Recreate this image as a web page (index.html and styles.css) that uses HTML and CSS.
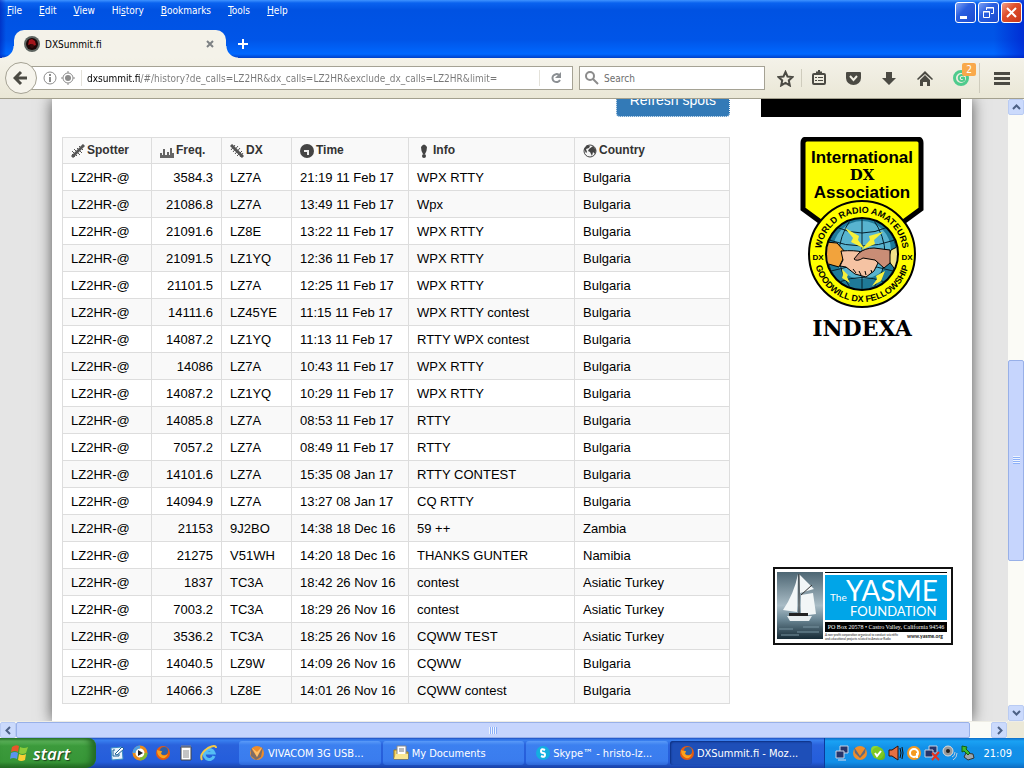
FILE: index.html
```html
<!DOCTYPE html>
<html lang="en">

<head>
    <meta charset="UTF-8">
    <meta name="viewport" content="width=device-width, initial-scale=1.0">
    <title>DXSummit.fi</title>
    <link rel="stylesheet" href="styles.css">
</head>

<body>
    <!-- window title, menu and tabs -->
    <header class="titlebar">
        <div class="menu-row">
            <nav class="menu">
                <button><u>F</u>ile</button>
                <button><u>E</u>dit</button>
                <button><u>V</u>iew</button>
                <button>Hi<u>s</u>tory</button>
                <button><u>B</u>ookmarks</button>
                <button><u>T</u>ools</button>
                <button><u>H</u>elp</button>
            </nav>
            <div class="window-buttons">
                <button class="win-btn" aria-label="Minimize"><svg width="19" height="19" viewBox="0 0 19 19"><path d="M4 13h7v3H4z" fill="#fff"/></svg></button>
                <button class="win-btn" aria-label="Restore"><svg width="19" height="19" viewBox="0 0 19 19" fill="none" stroke="#fff"><path d="M7.5 7V4.5h7v6H12M7 5h8"/><path d="M4.5 8.5h6v6h-6zM4 9h7"/></svg></button>
                <button class="win-btn close" aria-label="Close"><svg width="19" height="19" viewBox="0 0 19 19"><path d="M5 5l9 9M14 5l-9 9" stroke="#fff" stroke-width="2"/></svg></button>
            </div>
        </div>
        <div class="tabs">
            <div class="tab">
                <svg width="16" height="16" viewBox="0 0 16 16"><circle cx="8" cy="8" r="8" fill="#5d6460"/><circle cx="8" cy="8" r="6" fill="#1c0606"/><path d="M5 4l3-1 3 2 1 4-3 1-2-2-3 1z" fill="#a3161b"/><circle cx="8" cy="10" r="2" fill="#3c0c0c"/></svg>
                <span>DXSummit.fi</span>
                <button class="tab-close" aria-label="Close tab"><svg width="8" height="8" viewBox="0 0 8 8"><path d="M1 1l6 6M7 1L1 7" stroke="#7d8184" stroke-width="2"/></svg></button>
            </div>
            <button class="new-tab" aria-label="New tab"><svg width="12" height="12" viewBox="0 0 12 12"><path d="M6 1v10M1 6h10" stroke="#fff" stroke-width="2"/></svg></button>
        </div>
    </header>

    <div class="navbar">
        <button class="back" aria-label="Back"><svg width="16" height="16" viewBox="0 0 16 16" fill="none" stroke="#4b4a43" stroke-width="3"><path d="M8 2L2 8l6 6M2 8h12"/></svg></button>
        <div class="urlbar">
            <svg width="14" height="14" viewBox="0 0 14 14"><circle cx="7" cy="7" r="6" fill="none" stroke="#8b8b8b"/><path d="M6 3h2v2H6zM6 6h2v5H6z" fill="#8b8b8b"/></svg>
            <svg width="14" height="14" viewBox="0 0 14 14"><circle cx="7" cy="7" r="5" fill="none" stroke="#8b8b8b"/><circle cx="7" cy="7" r="3" fill="#8b8b8b"/><path d="M7 0v2M7 12v2M0 7h2M12 7h2" stroke="#8b8b8b"/></svg>
            <input class="url" type="text" aria-label="Address" value="dxsummit.fi/#/history?de_calls=LZ2HR&amp;dx_calls=LZ2HR&amp;exclude_dx_calls=LZ2HR&amp;limit=">
            <button class="reload" aria-label="Reload"><svg width="12" height="12" viewBox="0 0 12 12"><path d="M9 3a4 4 0 1 0 1 5" fill="none" stroke="#8b8f93" stroke-width="2"/><path d="M11 0v6H5z" fill="#8b8f93"/></svg></button>
        </div>
        <div class="search">
            <svg width="14" height="14" viewBox="0 0 14 14" fill="none" stroke="#8b8b8b" stroke-width="2"><circle cx="5" cy="5" r="4"/><path d="M8 8l5 5"/></svg>
            <input type="text" placeholder="Search" aria-label="Search">
        </div>
        <div class="tools">
            <button aria-label="Bookmark this page"><svg width="17" height="17" viewBox="0 0 17 17"><path d="M8.5 2l2 4.5 5 .5-3.7 3.4 1 5-4.3-2.6-4.3 2.6 1-5L1.5 7l5-.5z" fill="none" stroke="#4b4a43" stroke-width="2"/></svg></button>
            <button class="divided" aria-label="Show bookmarks"><svg width="14" height="16" viewBox="0 0 14 16" fill="none" stroke="#4b4a43"><rect x="1" y="4" width="12" height="10" rx="1" stroke-width="2"/><path d="M3 7.5h2M6 7.5h5M3 10.5h2M6 10.5h5"/><path d="M4 2.5h6M6 1h2" stroke-width="2"/></svg></button>
            <button aria-label="Pocket"><svg width="17" height="15" viewBox="0 0 17 15"><path d="M2 1h13q1 0 1 1v5a7.5 7 0 0 1-15 0V2q0-1 1-1z" fill="#4b4a43"/><path d="M5 5l3.5 4L12 5" fill="none" stroke="#f1efe3" stroke-width="2"/></svg></button>
            <button aria-label="Downloads"><svg width="14" height="15" viewBox="0 0 14 15"><path d="M4 1h6v6h4l-7 7-7-7h4z" fill="#4b4a43"/></svg></button>
            <button aria-label="Home"><svg width="16" height="15" viewBox="0 0 16 15"><path d="M8 0l8 8-1 1-7-6-7 6-1-1z" fill="#4b4a43"/><path d="M8 4l5 5v6h-3v-4H6v4H3V9z" fill="#4b4a43"/></svg></button>
            <button class="grammar" aria-label="Grammar check"><svg width="17" height="17" viewBox="0 0 17 17" fill="none" stroke="#4fcb8d"><circle cx="8" cy="8" r="6.5" stroke-width="3"/><path d="M11 6a3 3 0 1 0 0 4V8H8" stroke-width="2"/></svg><span class="badge">2</span></button>
            <button class="divided hamburger" aria-label="Open menu"><svg width="16" height="13" viewBox="0 0 16 13"><path d="M0 1.5h16M0 6.5h16M0 11.5h16" stroke="#4b4a43" stroke-width="3"/></svg></button>
        </div>
    </div>

    <div class="viewport">
        <div class="desk">
            <main class="sheet">
                <section class="spots">
                    <div class="clip right"><button class="btn-refresh">Refresh spots</button></div>
                    <table>
                        <colgroup>
                            <col class="c-spotter"><col class="c-freq"><col class="c-dx"><col class="c-time"><col class="c-info"><col>
                        </colgroup>
                        <thead>
                            <tr>
                                <th><svg width="14" height="14" viewBox="0 0 14 14" stroke="#555" fill="none"><path d="M1 13L13 1" stroke-width="3"/><path d="M1 7l5 5M3 5l6 6M6 4l5 5M8 2l4 4M1 10l3 3"/></svg>Spotter</th>
                                <th><svg width="14" height="14" viewBox="0 0 14 14"><path d="M0 14V9h2v2h1V5h2v6h2V8h2v3h1V4h2v5h2v5z" fill="#666"/></svg>Freq.</th>
                                <th><svg width="14" height="14" viewBox="0 0 14 14" stroke="#555" fill="none"><path d="M1 1l12 12" stroke-width="3"/><path d="M1 6l4-5M3 8l5-6M5 10l5-6M7 12l5-5M10 13l3-4"/></svg>DX</th>
                                <th><svg width="14" height="14" viewBox="0 0 14 14"><circle cx="7" cy="7" r="7" fill="#444"/><path d="M4 6h5v5H7V8H4z" fill="#eee"/></svg>Time</th>
                                <th><svg width="14" height="14" viewBox="0 0 14 14" fill="#444"><path d="M4 3q3-5 6 0 0 4-2 7H6Q4 7 4 3z"/><circle cx="7" cy="12" r="2"/></svg>Info</th>
                                <th><svg width="14" height="14" viewBox="0 0 14 14"><circle cx="7" cy="7" r="6" fill="#f4f4f4" stroke="#444"/><path d="M1 5l3-4 3 1-1 2-3 1 1 3-1 1zM6 5l4-3 3 4-1 4-2-2-1 4-2-4-2-1z" fill="#444"/></svg>Country</th>
                            </tr>
                        </thead>
                        <tbody>
                            <tr><td>LZ2HR-@</td><td>3584.3</td><td>LZ7A</td><td>21:19 11 Feb 17</td><td>WPX RTTY</td><td>Bulgaria</td></tr>
                            <tr><td>LZ2HR-@</td><td>21086.8</td><td>LZ7A</td><td>13:49 11 Feb 17</td><td>Wpx</td><td>Bulgaria</td></tr>
                            <tr><td>LZ2HR-@</td><td>21091.6</td><td>LZ8E</td><td>13:22 11 Feb 17</td><td>WPX RTTY</td><td>Bulgaria</td></tr>
                            <tr><td>LZ2HR-@</td><td>21091.5</td><td>LZ1YQ</td><td>12:36 11 Feb 17</td><td>WPX RTTY</td><td>Bulgaria</td></tr>
                            <tr><td>LZ2HR-@</td><td>21101.5</td><td>LZ7A</td><td>12:25 11 Feb 17</td><td>WPX RTTY</td><td>Bulgaria</td></tr>
                            <tr><td>LZ2HR-@</td><td>14111.6</td><td>LZ45YE</td><td>11:15 11 Feb 17</td><td>WPX RTTY contest</td><td>Bulgaria</td></tr>
                            <tr><td>LZ2HR-@</td><td>14087.2</td><td>LZ1YQ</td><td>11:13 11 Feb 17</td><td>RTTY WPX contest</td><td>Bulgaria</td></tr>
                            <tr><td>LZ2HR-@</td><td>14086</td><td>LZ7A</td><td>10:43 11 Feb 17</td><td>WPX RTTY</td><td>Bulgaria</td></tr>
                            <tr><td>LZ2HR-@</td><td>14087.2</td><td>LZ1YQ</td><td>10:29 11 Feb 17</td><td>WPX RTTY</td><td>Bulgaria</td></tr>
                            <tr><td>LZ2HR-@</td><td>14085.8</td><td>LZ7A</td><td>08:53 11 Feb 17</td><td>RTTY</td><td>Bulgaria</td></tr>
                            <tr><td>LZ2HR-@</td><td>7057.2</td><td>LZ7A</td><td>08:49 11 Feb 17</td><td>RTTY</td><td>Bulgaria</td></tr>
                            <tr><td>LZ2HR-@</td><td>14101.6</td><td>LZ7A</td><td>15:35 08 Jan 17</td><td>RTTY CONTEST</td><td>Bulgaria</td></tr>
                            <tr><td>LZ2HR-@</td><td>14094.9</td><td>LZ7A</td><td>13:27 08 Jan 17</td><td>CQ RTTY</td><td>Bulgaria</td></tr>
                            <tr><td>LZ2HR-@</td><td>21153</td><td>9J2BO</td><td>14:38 18 Dec 16</td><td>59 ++</td><td>Zambia</td></tr>
                            <tr><td>LZ2HR-@</td><td>21275</td><td>V51WH</td><td>14:20 18 Dec 16</td><td>THANKS GUNTER</td><td>Namibia</td></tr>
                            <tr><td>LZ2HR-@</td><td>1837</td><td>TC3A</td><td>18:42 26 Nov 16</td><td>contest</td><td>Asiatic Turkey</td></tr>
                            <tr><td>LZ2HR-@</td><td>7003.2</td><td>TC3A</td><td>18:29 26 Nov 16</td><td>contest</td><td>Asiatic Turkey</td></tr>
                            <tr><td>LZ2HR-@</td><td>3536.2</td><td>TC3A</td><td>18:25 26 Nov 16</td><td>CQWW TEST</td><td>Asiatic Turkey</td></tr>
                            <tr><td>LZ2HR-@</td><td>14040.5</td><td>LZ9W</td><td>14:09 26 Nov 16</td><td>CQWW</td><td>Bulgaria</td></tr>
                            <tr><td>LZ2HR-@</td><td>14066.3</td><td>LZ8E</td><td>14:01 26 Nov 16</td><td>CQWW contest</td><td>Bulgaria</td></tr>
                        </tbody>
                    </table>
                </section>

                <aside class="ads">
                    <div class="clip black"></div>
                    <a class="ad indexa" href="#">
                        <svg width="200" height="204" viewBox="0 0 200 204">
                            <defs>
                                <path id="arc-top" d="M60 117a41 41 0 0 1 82 0"/>
                                <path id="arc-bottom" d="M53 117a48 48 0 0 0 96 0"/>
                                <clipPath id="globe"><circle cx="101" cy="117" r="35"/></clipPath>
                            </defs>
                            <path d="M46 2h110q4 0 4 4v66l-30 22H72L42 72V6q0-4 4-4z" fill="#ffff00" stroke="#000" stroke-width="5"/>
                            <g font-family="Liberation Sans, sans-serif" font-weight="bold" text-anchor="middle">
                                <text x="101" y="26" font-size="17">International</text>
                                <text x="101" y="43" font-size="15" font-family="DejaVu Serif, serif">DX</text>
                                <text x="101" y="61" font-size="17">Association</text>
                            </g>
                            <circle cx="101" cy="117" r="53" fill="#ffff00" stroke="#000" stroke-width="2"/>
                            <circle cx="101" cy="117" r="36" fill="#1f7a98" stroke="#000" stroke-width="2"/>
                            <g clip-path="url(#globe)">
                                <circle cx="101" cy="113" r="29" fill="#58b4d0"/>
                                <path d="M75 90q26 12 52 0M68 103q33 12 66 0M66 118h70M70 134q31-10 62 0M78 145q23-9 46 0M101 80v74M90 82q-24 35 0 70M112 82q24 35 0 70M80 86q-28 31 0 62M122 86q28 31 0 62" fill="none" stroke="#06202c"/>
                                <path d="M64 105l12 1 9 10-7 14-14-4z" fill="#f2a33c" stroke="#000"/>
                                <path d="M138 109l-8 4-3 10 6 8 6-2z" fill="#f2e289" stroke="#000"/>
                                <path d="M80 114q14-1 21 1l8 3 8 8-4 8-8 6-11-3-9-7-6-1 3-6z" fill="#f5c3a3" stroke="#000"/>
                                <path d="M129 113l-16-2q-9 0-15 5l-5 6q3 3 9-1l12 2 9 8 6-5z" fill="#c98d76" stroke="#000"/>
                                <path d="M92 132l3 4M98 134l2 4M104 134l1 4M110 133l1 3" stroke="#000" fill="none"/>
                                <path d="M84 91l14 8-1 4 7 9-14-7 2-4zM122 95l-14 4 1 4-9 10 14-6-1-4zM81 132l6 6-1 2 3 6-8-5 1-3zM124 134l-9 5 1 3-5 7 9-5z" fill="#f7f13a"/>
                            </g>
                            <g font-family="Liberation Sans, sans-serif" font-weight="bold" text-anchor="middle">
                                <g font-size="9">
                                    <text><textPath href="#arc-top" startOffset="50%">WORLD RADIO AMATEURS</textPath></text>
                                    <text><textPath href="#arc-bottom" startOffset="50%">GOODWILL DX FELLOWSHIP</textPath></text>
                                </g>
                                <g font-size="8">
                                    <text x="57" y="123">DX</text>
                                    <text x="146" y="123">DX</text>
                                </g>
                                <text x="101" y="199" font-size="22" font-family="DejaVu Serif, serif">INDEXA</text>
                            </g>
                        </svg>
                    </a>
                    <a class="ad yasme" href="#">
                        <svg width="180" height="78" viewBox="0 0 180 78">
                            <defs>
                                <linearGradient id="sky" x1="0" y1="0" x2="0" y2="1">
                                    <stop offset="0" stop-color="#4d6673"/><stop offset=".5" stop-color="#a9bcc6"/><stop offset=".7" stop-color="#6d8997"/><stop offset="1" stop-color="#172b36"/>
                                </linearGradient>
                            </defs>
                            <path d="M1 1h178v76H1z" fill="#fff" stroke="#111" stroke-width="2"/>
                            <path d="M4 5h46v67H4z" fill="url(#sky)"/>
                            <path d="M25 7q-4 20-15 36l14 2zM26 7l15 15-14 4zM28 28l12-2 3 21-15 2z" fill="#f2f6f7"/>
                            <path d="M26 7v43M28 28l11-10" stroke="#333" fill="none"/>
                            <path d="M14 49h25l-3 5H17z" fill="#e8eef0"/><path d="M16 46h19v3H16z" fill="#222"/>
                            <path d="M6 62h14M24 65h22M8 68h18M30 60h16" stroke="#7894a1"/>
                            <path d="M52 5h122v1H52zM52 55h122v10H52z" fill="#000"/>
                            <path d="M52 8h122v45H52z" fill="#00a5e8"/>
                            <g font-family="Lato, sans-serif" fill="#fff">
                                <text x="57" y="34" font-size="10">The</text>
                                <text x="73" y="34" font-size="28">YASME</text>
                                <text x="77" y="49" font-size="13">FOUNDATION</text>
                                <text x="113" y="62" font-size="6" text-anchor="middle" font-family="Liberation Serif, serif">PO Box 20578 • Castro Valley, California 94546</text>
                            </g>
                            <g font-family="Lato, sans-serif" fill="#222">
                                <text x="52" y="69" font-size="3">A non-profit corporation organized to conduct scientific</text>
                                <text x="52" y="73" font-size="3">and educational projects related to Amateur Radio</text>
                                <text x="134" y="71" font-size="5" font-weight="900">www.yasme.org</text>
                            </g>
                        </svg>
                    </a>
                </aside>
            </main>
        </div>
        <div class="vscroll">
            <button aria-label="Scroll up"><svg width="9" height="9" viewBox="0 0 9 9"><path d="M1 6l3.5-3.5L8 6" fill="none" stroke="#4d6185" stroke-width="2"/></svg></button>
            <div class="space-above"></div>
            <div class="thumb"><svg width="7" height="8" viewBox="0 0 7 8"><path d="M0 .5h7M0 2.5h7M0 4.5h7M0 6.5h7" stroke="#eef4fe"/><path d="M0 1.5h7M0 3.5h7M0 5.5h7M0 7.5h7" stroke="#8cb0f8"/></svg></div>
            <div class="space-below"></div>
            <button aria-label="Scroll down"><svg width="9" height="9" viewBox="0 0 9 9"><path d="M1 3l3.5 3.5L8 3" fill="none" stroke="#4d6185" stroke-width="2"/></svg></button>
        </div>
    </div>

    <div class="hscroll">
        <button aria-label="Scroll left"><svg width="9" height="9" viewBox="0 0 9 9"><path d="M6 1L2.5 4.5 6 8" fill="none" stroke="#4d6185" stroke-width="2"/></svg></button>
        <div class="thumb"><svg width="8" height="7" viewBox="0 0 8 7"><path d="M.5 0v7M2.5 0v7M4.5 0v7M6.5 0v7" stroke="#eef4fe"/><path d="M1.5 0v7M3.5 0v7M5.5 0v7M7.5 0v7" stroke="#8cb0f8"/></svg></div>
        <div class="space-after"></div>
        <button aria-label="Scroll right"><svg width="9" height="9" viewBox="0 0 9 9"><path d="M3 1l3.5 3.5L3 8" fill="none" stroke="#4d6185" stroke-width="2"/></svg></button>
        <div class="corner"></div>
    </div>

    <footer class="taskbar">
        <button class="start">
            <svg width="19" height="18" viewBox="0 0 19 18"><path d="M2 3q4-3 7-1L8 8Q5 6 1 8z" fill="#e8562a"/><path d="M10 3q4 2 8 0l-2 6q-4 2-7 0z" fill="#8ccc3a"/><path d="M1 9q4-2 7 0l-1 6q-4-2-7 0z" fill="#5b93ee"/><path d="M9 10q4 2 7 0l-1 6q-4 2-7 0z" fill="#f9cf34"/></svg>
            start
        </button>
        <div class="quick">
            <button aria-label="Show desktop"><svg width="16" height="16" viewBox="0 0 16 16"><path d="M2 3l11-1 1 12-11 1z" fill="#e9f3fb" stroke="#3b8ec4"/><path d="M6 5H4v6h6V9" stroke="#1b5f96" fill="none"/><path d="M6 9l7-7 2 2-7 6z" fill="#fff" stroke="#1b5f96"/></svg></button>
            <button aria-label="Media player"><svg width="16" height="16" viewBox="0 0 16 16"><circle cx="8" cy="8" r="6" fill="#fff" stroke="#e98c1c" stroke-width="3"/><path d="M2 8a6 6 0 0 1 6-6" stroke="#4aa0e8" stroke-width="3" fill="none"/><path d="M8 14a6 6 0 0 0 6-6" stroke="#7dbb35" stroke-width="3" fill="none"/><path d="M6 5l5 3-5 3z" fill="#222"/></svg></button>
            <button aria-label="Firefox"><svg width="14" height="14" viewBox="0 0 14 14"><circle cx="7" cy="7" r="7" fill="#e35a10"/><circle cx="8" cy="5" r="4" fill="#2c5fa8"/><path d="M1 4q2 1 5 1l-1 3q3 3 7 0-2 5-6 4-5-2-5-8z" fill="#fba31c"/></svg></button>
            <button aria-label="Notepad"><svg width="12" height="16" viewBox="0 0 12 16"><path d="M1 2h10v13H1z" fill="#fff" stroke="#444"/><path d="M2 0v3M4 0v3M6 0v3M8 0v3M10 0v3M3 6h6M3 8h6M3 10h6M3 12h6" stroke="#888"/></svg></button>
            <button aria-label="Internet Explorer"><svg width="18" height="16" viewBox="0 0 18 16"><path d="M14 11a5 5 0 1 1 0-3H5" fill="none" stroke="#55bdf4" stroke-width="3"/><path d="M2 15Q-1 9 8 3q8-4 8 0" fill="none" stroke="#f5ca47" stroke-width="2"/></svg></button>
        </div>
        <div class="tasks">
            <button><svg width="16" height="16" viewBox="0 0 16 16"><circle cx="8" cy="8" r="7" fill="#ef8d2a"/><path d="M2 3l6 9 6-10-2 10-5 3-5-4z" fill="#7d6d67"/><path d="M3 3l5 4 5-5-5 10z" fill="#fbc06c"/></svg>VIVACOM 3G USB...</button>
            <button><svg width="16" height="16" viewBox="0 0 16 16"><path d="M1 5h5l1 2h8v7H1z" fill="#f0d264" stroke="#a37b17"/><path d="M4 1h9v10H4z" fill="#fff" stroke="#888"/><path d="M6 4h5M6 6h5" stroke="#777"/><path d="M1 14l2-5h12v5z" fill="#fae691"/></svg>My Documents</button>
            <button><svg width="14" height="14" viewBox="0 0 14 14"><circle cx="7" cy="7" r="7" fill="#14aee0"/><path d="M9 4Q5 2 5 5q0 2 2 2t2 2q0 3-4 1" fill="none" stroke="#fff" stroke-width="2"/></svg>Skype™ - hristo-lz...</button>
            <button class="active"><svg width="14" height="14" viewBox="0 0 14 14"><circle cx="7" cy="7" r="7" fill="#e35a10"/><circle cx="8" cy="5" r="4" fill="#2c5fa8"/><path d="M1 4q2 1 5 1l-1 3q3 3 7 0-2 5-6 4-5-2-5-8z" fill="#fba31c"/></svg>DXSummit.fi - Moz...</button>
        </div>
        <div class="tray">
            <svg width="16" height="16" viewBox="0 0 16 16"><path d="M6 1h8v7H6z" fill="#26346a" stroke="#c8d2e4"/><path d="M2 6h8v7H2z" fill="#26346a" stroke="#c8d2e4"/><path d="M4 15h8" stroke="#dde"/></svg>
            <svg width="16" height="16" viewBox="0 0 16 16"><circle cx="8" cy="8" r="7" fill="#ef8d2a"/><path d="M2 2l6 9 6-9-1 6-5 5-5-5z" fill="#626a7d"/></svg>
            <svg width="16" height="16" viewBox="0 0 16 16"><rect x="1" y="1" width="9" height="9" rx="4" fill="#8fd633"/><rect x="6" y="6" width="9" height="9" rx="4" fill="#6bb81b"/><circle cx="8" cy="8" r="6" fill="#7cc822"/><path d="M5 8l2 3 4-5" stroke="#fff" stroke-width="2" fill="none"/></svg>
            <svg width="16" height="16" viewBox="0 0 16 16"><path d="M1 5h3l6-4v14l-6-4H1z" fill="#e77043" stroke="#301008"/><path d="M12 3q2 5 0 10M14 2q2 6 0 12" stroke="#111" fill="none"/></svg>
            <svg width="16" height="16" viewBox="0 0 16 16"><circle cx="8" cy="8" r="7" fill="#f59a20"/><circle cx="8" cy="8" r="4" stroke="#fff" stroke-width="2" fill="none"/><path d="M11 8v5" stroke="#fff" stroke-width="2"/></svg>
            <svg width="16" height="16" viewBox="0 0 16 16"><path d="M5 1h8v7H5z" fill="#26346a" stroke="#c8d2e4"/><path d="M1 5h8v7H1z" fill="#26346a" stroke="#c8d2e4"/><path d="M8 8l7 7M15 7l-7 8" stroke="#e8301c" stroke-width="2"/></svg>
            <svg width="16" height="16" viewBox="0 0 16 16"><circle cx="6" cy="6" r="5" fill="#999" stroke="#ddd"/><circle cx="6" cy="6" r="2" fill="#222"/><path d="M10 12q3-1 3-5M11 15q4-2 4-7" stroke="#bcd" fill="none"/></svg>
            <svg width="16" height="16" viewBox="0 0 16 16"><path d="M6 8l7 1 1 4-6 2-4-3z" fill="#9fa7ad" stroke="#333"/><path d="M2 1l5 1-1 2 4 4-2 2-4-4-2 1z" fill="#3ebc2f" stroke="#155c10"/></svg>
            <span class="clock">21:09</span>
        </div>
    </footer>
</body>

</html>
```
FILE: styles.css
```css
* {
    box-sizing: border-box;
}

body {
    margin: 0;
    height: 100vh;
    display: flex;
    flex-direction: column;
    overflow: hidden;
    font-family: "DejaVu Sans Condensed", "DejaVu Sans", sans-serif;
    font-size: 10px;
}

button {
    border: none;
    background: none;
    padding: 0;
    font: inherit;
    color: inherit;
}

input {
    border: none;
    background: none;
    outline: none;
    padding: 0;
    font: inherit;
    min-width: 0;
}

svg {
    display: block;
    flex-shrink: 0;
}

/* title bar */
.titlebar {
    background: linear-gradient(to right, rgba(0, 20, 170, 0.5), transparent 6px, transparent calc(100% - 30px), rgba(0, 20, 200, 0.6)),
        linear-gradient(#3f93ff, #0a62ef 3px, #0052e2 10px, #0055e8 40px, #0068ff 54px, #0040c8);
    color: #fff;
}

.menu-row {
    display: flex;
    justify-content: space-between;
    height: 30px;
}

.menu {
    display: flex;
    align-items: center;
    height: 21px;
    gap: 17px;
    padding-left: 7px;
}

.window-buttons {
    display: flex;
    gap: 2px;
    padding: 2px 2px 0 0;
}

.win-btn {
    width: 21px;
    height: 21px;
    border: 1px solid #fff;
    border-radius: 3px;
    background: linear-gradient(135deg, #7ea2f5, #2a5fe0 40%, #1c4bd0);
}

.win-btn.close {
    background: linear-gradient(135deg, #f0a08a, #e0502c 40%, #c8361a);
}

.tabs {
    display: flex;
    height: 28px;
    padding-left: 14px;
}

.tab {
    position: relative;
    display: flex;
    align-items: center;
    gap: 5px;
    width: 212px;
    padding: 0 12px 0 10px;
    border-radius: 10px 10px 0 0;
    background: #f4f2e9;
    color: #000;
}

.tab::before,
.tab::after {
    content: "";
    position: absolute;
    bottom: 0;
    width: 12px;
    height: 12px;
}

.tab::before {
    right: 100%;
    background: radial-gradient(circle at 0 0, transparent 11px, #f4f2e9 12px);
}

.tab::after {
    left: 100%;
    background: radial-gradient(circle at 100% 0, transparent 11px, #f4f2e9 12px);
}

.tab-close {
    margin-left: auto;
}

.new-tab {
    margin-left: 11px;
}

/* navigation bar */
.navbar {
    display: flex;
    align-items: center;
    height: 41px;
    padding: 0 12px 0 5px;
    background: linear-gradient(#f4f2e9, #eae7d6);
    border-bottom: 1px solid #a3a08e;
}

.back {
    position: relative;
    display: flex;
    align-items: center;
    justify-content: center;
    width: 32px;
    height: 32px;
    border: 1px solid #a5a294;
    border-radius: 50%;
    background: #f6f4ec;
}

.urlbar,
.search {
    display: flex;
    align-items: center;
    height: 24px;
    border: 1px solid #a5a294;
    background: #fff;
}

.urlbar {
    flex: 1;
    min-width: 0;
    gap: 4px;
    margin-left: -8px;
    padding-left: 13px;
}

/* host name is black, the rest of the address is grey */
.url {
    flex: 1;
    height: 16px;
    margin-left: 2px;
    padding-left: 5px;
    border-left: 1px solid #e4e2da;
    color: transparent;
    background: linear-gradient(to right, #000 59px, #777 59px);
    background-clip: text;
    -webkit-background-clip: text;
}

.reload {
    display: flex;
    align-items: center;
    justify-content: center;
    width: 33px;
    height: 16px;
    border-left: 1px solid #e4e2da;
}

.search {
    width: 186px;
    margin-left: 6px;
    padding: 0 5px;
    gap: 5px;
}

.search input {
    flex: 1;
}

.search input::placeholder {
    color: #6d6d6d;
}

.tools {
    display: flex;
    align-items: center;
    margin-left: 4px;
}

.tools button {
    position: relative;
    display: flex;
    align-items: center;
    justify-content: center;
    width: 36px;
    height: 30px;
}

.tools button:first-child {
    width: 32px;
}

.tools .divided {
    width: 34px;
    height: 18px;
    border-left: 1px solid #cfccbd;
}

.tools .hamburger {
    justify-content: flex-end;
    padding-right: 2px;
    width: 33px;
    height: 30px;
}

.badge {
    position: absolute;
    top: 0;
    right: 3px;
    width: 14px;
    height: 13px;
    border-radius: 2px;
    background: #f9a94b;
    color: #fff;
    line-height: 13px;
    text-align: center;
}

/* page */
.viewport {
    flex: 1;
    display: flex;
    min-height: 0;
}

.desk {
    flex: 1;
    display: flex;
    min-width: 0;
    overflow: hidden;
    padding: 0 36px 0 52px;
    background: #e5e5e5;
}

.sheet {
    flex: 1;
    display: flex;
    gap: 31px;
    min-width: 0;
    padding: 0 11px 0 10px;
    background: #fff;
    box-shadow: 0 0 14px #555;
    font-family: "Liberation Sans", Arial, sans-serif;
    font-size: 13px;
}

.spots {
    flex: 1;
    min-width: 0;
}

.clip {
    display: flex;
    align-items: flex-end;
    height: 18px;
    margin-bottom: 20px;
    overflow: hidden;
}

.clip.right {
    justify-content: flex-end;
}

.clip.black {
    background: #000;
}

.btn-refresh {
    flex-shrink: 0;
    height: 34px;
    padding: 0 13px;
    border: 1px dotted #fff;
    border-radius: 4px;
    background: #337ab7;
    color: #fff;
    font-size: 14px;
}

table {
    width: 100%;
    table-layout: fixed;
    border-collapse: collapse;
}

th,
td {
    height: 27px;
    padding: 0 8px;
    border: 1px solid #ddd;
    text-align: left;
    white-space: nowrap;
}

th {
    height: 26px;
    background: #f9f9f9;
    color: #333;
    font-size: 12px;
}

th svg {
    display: inline-block;
    margin-right: 2px;
    vertical-align: middle;
}

td:nth-child(2) {
    text-align: right;
}

tbody tr:nth-child(even) {
    background: #f9f9f9;
}

.c-spotter {
    width: 89px;
}

.c-freq,
.c-dx {
    width: 70px;
}

.c-time {
    width: 117px;
}

.c-info {
    width: 166px;
}

.ads {
    width: 200px;
}

.ad {
    display: flex;
    justify-content: center;
}

.yasme {
    margin-top: 226px;
    padding-left: 3px;
}

/* scroll bars */
.vscroll {
    display: flex;
    flex-direction: column;
    width: 16px;
    background: #fbfbf6;
}

.hscroll {
    display: flex;
    height: 17px;
    background: #fbfbf6;
    border-top: 1px solid #eeede5;
}

.vscroll button,
.hscroll button {
    display: flex;
    align-items: center;
    justify-content: center;
    width: 16px;
    height: 16px;
    border: 1px solid #b9cbf3;
    border-radius: 2px;
    background: #cbdafc;
}

.thumb {
    display: flex;
    align-items: center;
    justify-content: center;
    border: 1px solid #98b0e8;
    border-radius: 2px;
    background: #c6d5fd;
}

.vscroll .thumb {
    flex: 200;
}

.space-above {
    flex: 245;
}

.space-below {
    flex: 144;
}

.hscroll .thumb {
    flex: 954;
}

.space-after {
    flex: 21;
}

.corner {
    width: 17px;
    background: #ece9d8;
}

/* taskbar */
.taskbar {
    display: flex;
    height: 30px;
    background: linear-gradient(#1f4fc0, #3a81f0 2px, #2a62dc 7px, #245ddb 24px, #1941a5);
    color: #fff;
    font-size: 11px;
}

.start {
    display: flex;
    align-items: center;
    gap: 4px;
    width: 96px;
    padding-left: 10px;
    border-radius: 0 8px 10px 0;
    background: linear-gradient(#2c7a2c, #5eb65c 3px, #3c9a3c 8px, #379637 24px, #226b22);
    box-shadow: inset -5px 0 6px #236a23;
    font-family: "Open Sans", sans-serif;
    font-size: 17px;
    font-weight: 600;
    font-style: italic;
    text-shadow: 1px 1px 1px #1b3f1b;
}

.quick {
    display: flex;
    align-items: center;
    width: 143px;
    padding-left: 9px;
}

.quick button {
    display: flex;
    justify-content: center;
    width: 23px;
}

.tasks {
    flex: 1;
    display: flex;
    gap: 2px;
    padding: 3px 13px 3px 0;
}

.tasks button {
    flex: 1;
    display: flex;
    align-items: center;
    gap: 3px;
    min-width: 0;
    padding-left: 10px;
    border-radius: 3px;
    background: linear-gradient(#5a9af8, #3c80f0 4px, #3a7cee 20px, #2e68d8);
    white-space: nowrap;
}

.tasks .active {
    background: #1e4fb8;
    box-shadow: inset 1px 1px 2px #0c2f80;
}

.tray {
    display: flex;
    align-items: center;
    gap: 2px;
    padding: 0 12px 0 9px;
    border-left: 1px solid #0b3a9c;
    background: linear-gradient(#0c6cc8, #1aa2f4 3px, #1290e8 10px, #118fe8 24px, #0d6bc0);
}

.clock {
    margin-left: 5px;
}
```
